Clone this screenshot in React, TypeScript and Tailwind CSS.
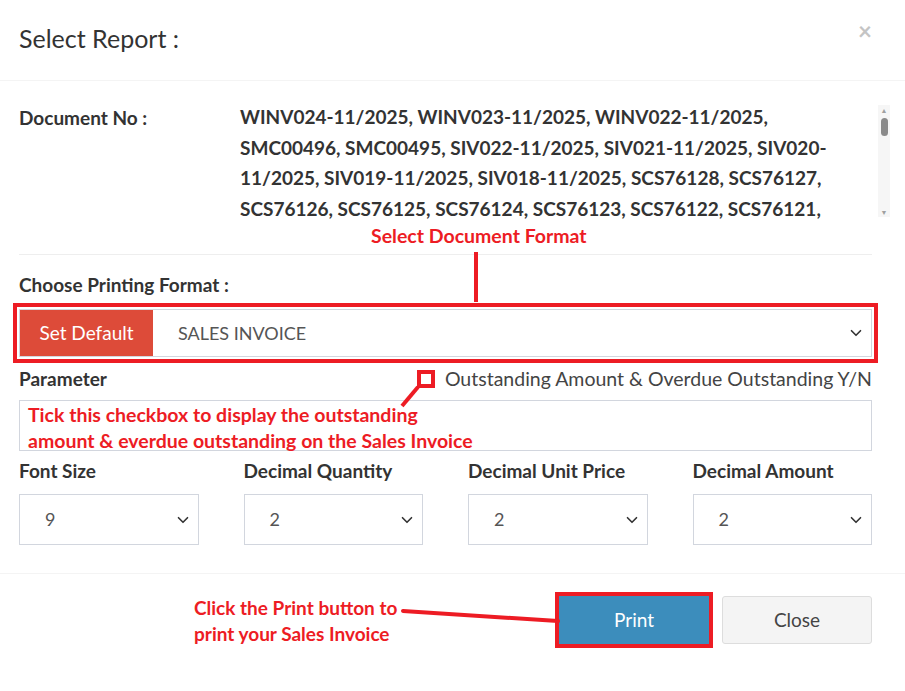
import { ChevronDown } from "lucide-react"

const docNos =
  "WINV024-11/2025, WINV023-11/2025, WINV022-11/2025, SMC00496, SMC00495, SIV022-11/2025, SIV021-11/2025, SIV020-11/2025, SIV019-11/2025, SIV018-11/2025, SCS76128, SCS76127, SCS76126, SCS76125, SCS76124, SCS76123, SCS76122, SCS76121, SCS76120, SCS76119"

function SmallSelect({ label, value }: { label: string; value: string }) {
  return (
    <div className="flex flex-col">
      <div className="text-[19px] font-bold text-[#333] leading-[26px] mb-[10px]">{label}</div>
      <div className="h-[51px] border border-[#d2d6de] flex items-center justify-between pl-[25px] pr-[6px] text-[18px] text-[#555]">
        <span>{value}</span>
        <ChevronDown size={18} strokeWidth={2.2} className="text-[#333]" />
      </div>
    </div>
  )
}

export default function App() {
  return (
    <div className="relative w-[905px] h-[691px] bg-white font-['Lato',sans-serif] overflow-hidden">
      {/* header */}
      <div className="h-[81px] flex items-center justify-between pl-[19px] pr-[33px] border-b border-[#f4f4f4]">
        <h4 className="text-[25px] text-[#333] pb-[2px]">Select Report :</h4>
        <span className="text-[24px] font-bold text-[#c4c4c4] -mt-[18px]">×</span>
      </div>

      {/* body */}
      <div className="pl-[19px] pr-[33px] pt-[21px]">
        <div className="relative flex h-[117px] overflow-hidden -mr-[18px] pr-[15px]">
          <div className="w-[221px] shrink-0 text-[19px] font-bold text-[#333] leading-[30.5px] pt-[1px]">Document No :</div>
          <div className="flex-1 text-[19px] font-bold text-[#333] leading-[30.5px] pr-[40px]">{docNos}</div>
          <div className="absolute right-0 top-[3px] w-[12px] h-[112px] flex flex-col items-center bg-[#f6f6f6]">
            <span className="text-[7px] text-[#a0a0a0] leading-[10px]">▲</span>
            <div className="w-[7px] h-[18px] rounded-full bg-[#8a8a8a] mt-[3px]" />
            <div className="flex-1" />
            <span className="text-[7px] text-[#a0a0a0] leading-[10px]">▼</span>
          </div>
        </div>

        <div className="h-[36px] border-b border-[#eeeeee]" />

        <div className="text-[19px] font-bold text-[#333] leading-[26px] mt-[17px]">Choose Printing Format :</div>

        <div className="mt-[11px] flex h-[48px] border border-[#d2d6de] outline-[4px] outline-solid outline-[#ed1c24] outline-offset-[2px]">
          <button className="w-[133px] bg-[#dd4b39] text-white text-[19px]">Set Default</button>
          <div className="flex-1 flex items-center justify-between pl-[25px] pr-[6px] text-[18px] text-[#555]">
            <span>SALES INVOICE</span>
            <ChevronDown size={18} strokeWidth={2.2} className="text-[#333]" />
          </div>
        </div>

        <div className="flex items-center justify-between mt-[8px] h-[28px]">
          <span className="text-[19px] font-bold text-[#333]">Parameter</span>
          <label className="flex items-center gap-[10px] text-[19.5px] text-[#444]">
            <span className="w-[18px] h-[18px] border-[4px] border-[#ed1c24] bg-white" />
            Outstanding Amount &amp; Overdue Outstanding Y/N
          </label>
        </div>

        <div className="mt-[7px] h-[51px] border border-[#d2d6de] pl-[8px] pt-[1px] text-[19.5px] font-bold text-[#ed1c24] leading-[26px] whitespace-nowrap">
          Tick this checkbox to display the outstanding
          <br />
          amount &amp; everdue outstanding on the Sales Invoice
        </div>

        <div className="grid grid-cols-4 gap-[45px] mt-[7px]">
          <SmallSelect label="Font Size" value="9" />
          <SmallSelect label="Decimal Quantity" value="2" />
          <SmallSelect label="Decimal Unit Price" value="2" />
          <SmallSelect label="Decimal Amount" value="2" />
        </div>
      </div>

      {/* footer */}
      <div className="mt-[28px] border-t border-[#f4f4f4] flex items-start justify-end gap-[13px] pr-[33px] pt-[22px]">
        <div className="mr-auto pl-[194px] text-[19px] font-bold text-[#ed1c24] leading-[26px] -mt-[1px]">
          Click the Print button to
          <br />
          print your Sales Invoice
        </div>
        <button className="w-[150px] h-[48px] bg-[#3c8dbc] text-white text-[19px] outline-[4px] outline-solid outline-[#ed1c24] outline-offset-[0px]">
          Print
        </button>
        <button className="w-[150px] h-[48px] bg-[#f4f4f4] border border-[#ddd] rounded-[3px] text-[19px] text-[#444]">
          Close
        </button>
      </div>

      {/* annotations */}
      <div className="absolute left-[371px] top-[224px] text-[19.5px] font-bold text-[#ed1c24] leading-[24px]">
        Select Document Format
      </div>
      <svg className="absolute inset-0 pointer-events-none" width="905" height="691">
        <line x1="476" y1="252" x2="476" y2="302" stroke="#ed1c24" strokeWidth="4" />
        <line x1="418" y1="387" x2="402" y2="406" stroke="#ed1c24" strokeWidth="4" />
        <line x1="403" y1="611" x2="558" y2="621" stroke="#ed1c24" strokeWidth="4" strokeLinecap="round" />
      </svg>
    </div>
  )
}
